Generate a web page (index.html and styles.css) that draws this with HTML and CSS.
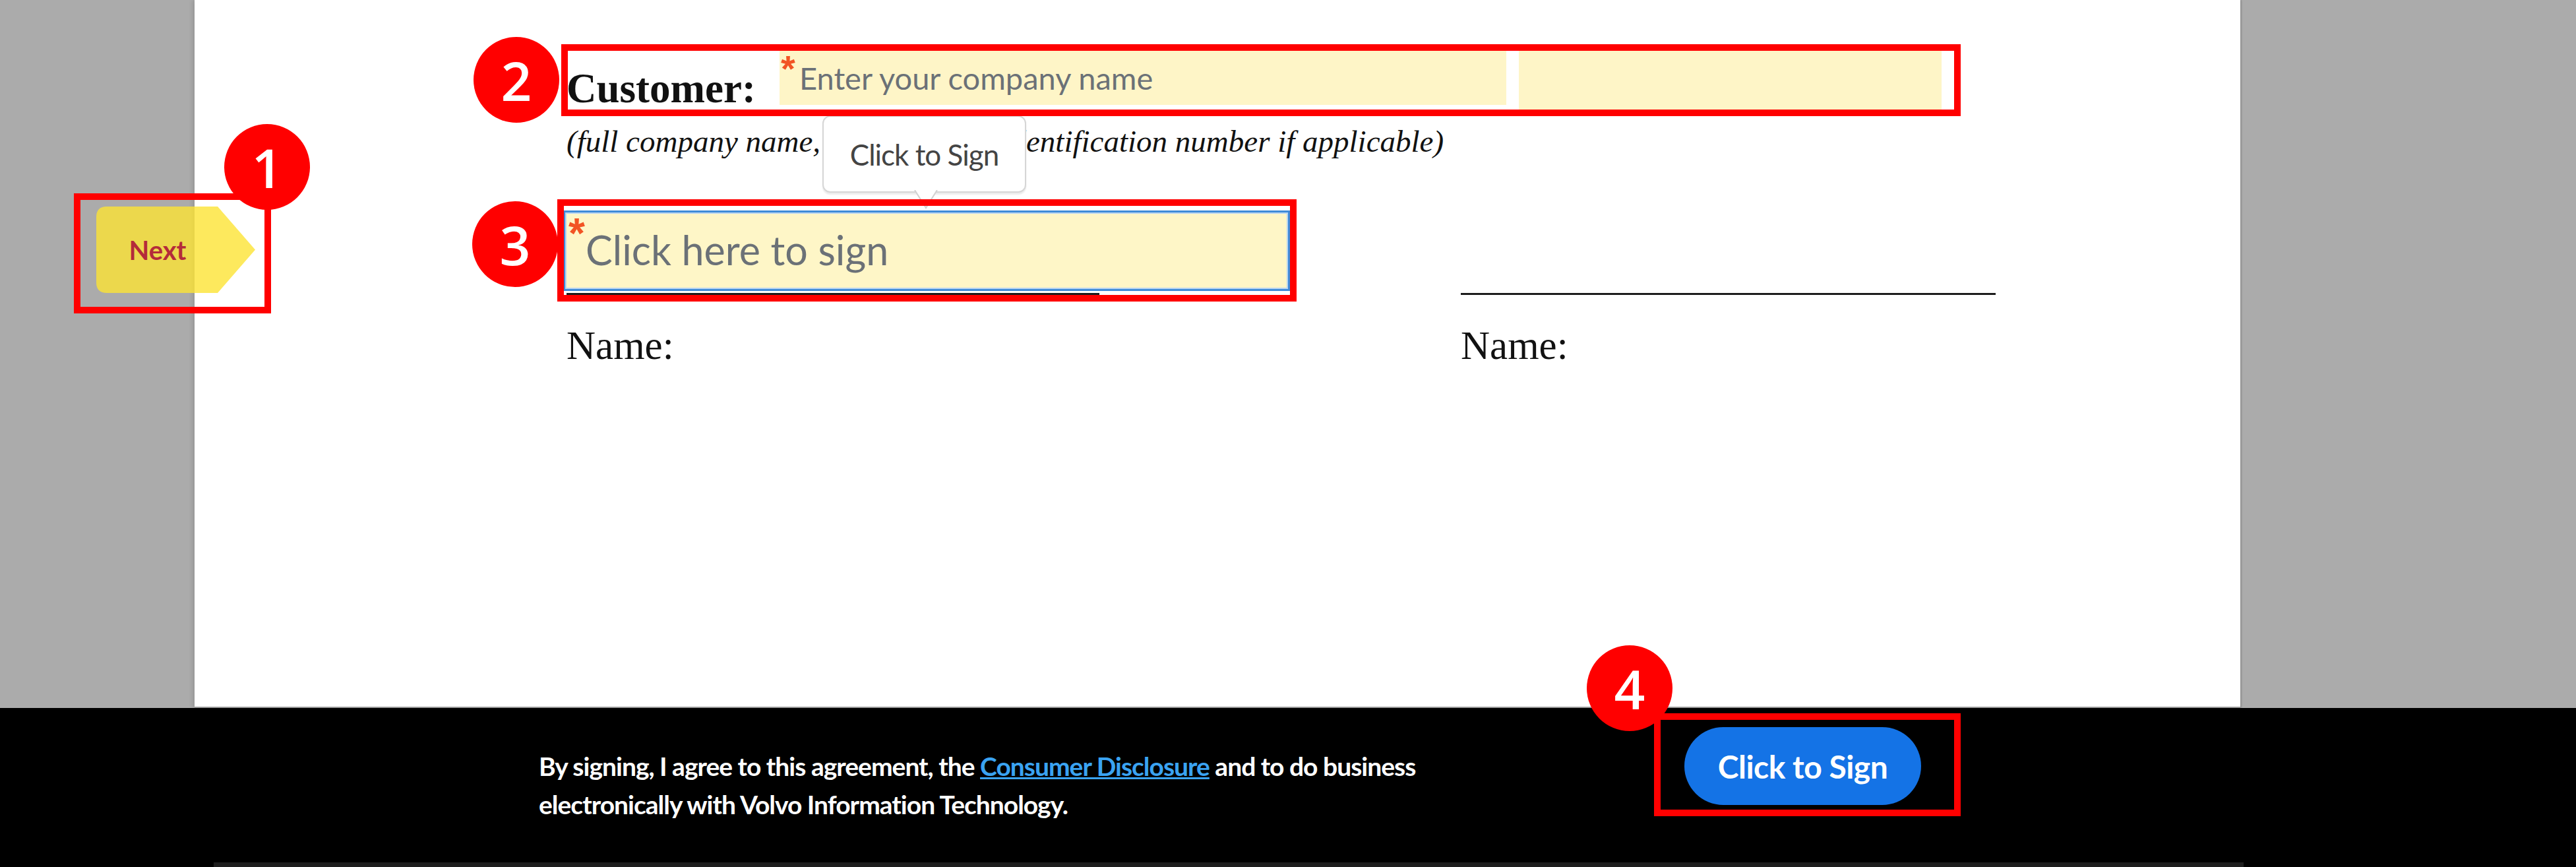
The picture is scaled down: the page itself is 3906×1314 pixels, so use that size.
FILE: index.html
```html
<!DOCTYPE html>
<html>
    <head>
        <meta charset="utf-8">
        <title>Sign agreement</title>
        <link rel="stylesheet" href="styles.css">
    </head>

    <body>
        <div id="viewer">
            <div id="page">
                <div class="customer_row">
                    <span class="customer_label">Customer:</span>
                    <div class="field field_company">
                        <span class="req">*</span>
                        <span class="placeholder">Enter your company name</span>
                    </div>
                    <div class="field field_extra"></div>
                </div>

                <p class="hint">(full company name, and company identification number if applicable)</p>

                <div class="sign_row">
                    <div class="sign_col sign_col_left">
                        <div class="sign_slot">
                            <div class="sign_field">
                                <span class="req req_big">*</span>
                                <span class="sign_text">Click here to sign</span>
                            </div>
                        </div>
                        <div class="sign_line sign_line_short"></div>
                        <div class="name_label">Name:</div>
                    </div>
                    <div class="sign_col">
                        <div class="sign_slot"></div>
                        <div class="sign_line"></div>
                        <div class="name_label">Name:</div>
                    </div>
                </div>
            </div>
        </div>

        <div id="footer">
            <div class="footer_main">
                <p class="consent">By signing, I agree to this agreement, the <a href="#">Consumer Disclosure</a> and to do business electronically with Volvo Information Technology.</p>
                <button class="sign_btn">Click to Sign</button>
            </div>
            <div class="footer_edge"></div>
        </div>

        <!-- floating bits: next tag, tooltip, and the numbered callouts -->
        <div id="overlay">
            <div class="next_tag">
                <svg width="241" height="131" viewBox="0 0 241 131">
                    <path d="M16 0 H184 L241 65.5 L184 131 H16 Q0 131 0 115 V16 Q0 0 16 0 Z" fill="rgba(252,228,52,0.8)"/>
                </svg>
                <span>Next</span>
            </div>

            <div class="tooltip">
                Click to Sign
                <svg class="tip_arrow" width="36" height="30" viewBox="0 0 36 30">
                    <path d="M1 0 L18 27 L35 0" fill="#fff" stroke="#d2d2d2" stroke-width="2"/>
                </svg>
            </div>

            <div class="mark mark_1"></div>
            <div class="mark mark_2"></div>
            <div class="mark mark_3"></div>
            <div class="mark mark_4"></div>

            <div class="badge badge_1">1</div>
            <div class="badge badge_2">2</div>
            <div class="badge badge_3">3</div>
            <div class="badge badge_4">4</div>
        </div>
    </body>
</html>
```

FILE: styles.css
```css
body {
    margin : 0;
    position : relative;
    background-color : #ababab;
    font-family : Lato, "Open Sans", sans-serif;
    overflow : hidden;
}

div#viewer {
    height : 1073px;
    display : flex;
}

div#page {
    margin-left : 295px;
    width : 3102px;
    box-sizing : border-box;
    background-color : white;
    border-bottom : 2px solid #9a9a9a;
    box-shadow : -3px 0 6px rgba(0,0,0,0.12), 2px 0 2px rgba(0,0,0,0.15);
    padding : 77px 0 0 564px;
}

/* customer line */

div.customer_row {
    display : flex;
    align-items : flex-start;
    height : 92px;
}

span.customer_label {
    width : 323px;
    padding-top : 26px;
    font : bold 63px/1 "Liberation Serif", serif;
    color : #111;
}

div.field {
    background-color : #fef5c7;
    position : relative;
}

div.field_company {
    width : 1102px;
    height : 82px;
    box-sizing : border-box;
    padding : 18px 0 0 30px;
}

div.field_extra {
    margin-left : 19px;
    width : 641px;
    height : 92px;
}

span.req {
    position : absolute;
    left : 2px;
    top : -1px;
    color : #f25424;
    font : bold 56px/1 "Liberation Sans", sans-serif;
}

span.req_big {
    left : 5px;
    top : 0;
    font-size : 64px;
}

span.placeholder {
    display : block;
    font-size : 47px;
    line-height : 1;
    color : #6b7177;
}

p.hint {
    margin : 18px 0 0;
    font : italic 47px/54px "Liberation Serif", serif;
    color : #111;
    white-space : nowrap;
}

/* signature blocks */

div.sign_row {
    display : flex;
    margin-top : 78px;
}

div.sign_col_left {
    width : 1356px;
}

div.sign_slot {
    height : 125px;
}

div.sign_field {
    position : relative;
    margin-left : -5px;
    width : 1102px;
    height : 122px;
    box-sizing : border-box;
    border : 3px solid #3f8bd8;
    box-shadow : inset 0 0 0 2px #b9d5f1;
    background-color : #fef6c7;
    padding : 26px 0 0 31px;
}

span.sign_text {
    display : block;
    font-size : 61px;
    line-height : 1;
    color : #6b7177;
}

div.sign_line {
    height : 3px;
    width : 811px;
    background-color : #1c1c1c;
}

div.sign_line_short {
    width : 808px;
}

div.name_label {
    margin-top : 42px;
    font : 61px/70px "Liberation Serif", serif;
    color : #111;
}

/* footer */

div#footer {
    height : 241px;
    background-color : black;
    display : flex;
    flex-direction : column;
}

div.footer_main {
    flex : 1;
    display : flex;
    align-items : flex-start;
    padding : 29px 0 0 817px;
}

p.consent {
    margin : 30px 0 0;
    width : 1400px;
    font-size : 39px;
    line-height : 58px;
    font-weight : bold;
    letter-spacing : -1px;
    color : white;
}

p.consent a {
    color : #3aa3f2;
}

button.sign_btn {
    margin-left : 337px;
    width : 359px;
    height : 118px;
    border : none;
    border-radius : 59px;
    background-color : #1473e6;
    color : white;
    font : bold 48px Lato, sans-serif;
    letter-spacing : -0.5px;
}

div.footer_edge {
    height : 7px;
    margin-left : 324px;
    width : 3078px;
    background-color : #1e1e1e;
}

/* overlay */

div#overlay {
    position : absolute;
    left : 0;
    top : 0;
    width : 100%;
    height : 100%;
    pointer-events : none;
}

div.next_tag {
    position : absolute;
    left : 146px;
    top : 313px;
    width : 241px;
    height : 131px;
}

div.next_tag svg {
    display : block;
}

div.next_tag span {
    position : absolute;
    left : 0;
    top : 0;
    width : 186px;
    height : 131px;
    display : flex;
    align-items : center;
    justify-content : center;
    font-size : 40px;
    font-weight : bold;
    color : #b42b3a;
}

div.tooltip {
    position : absolute;
    left : 1247px;
    top : 175px;
    width : 309px;
    height : 117px;
    box-sizing : border-box;
    border : 2px solid #d6d6d6;
    border-radius : 12px;
    background-color : white;
    box-shadow : 0 3px 2px rgba(0,0,0,0.08);
    display : flex;
    align-items : center;
    justify-content : center;
    font-size : 44px;
    letter-spacing : -1px;
    color : #444;
}

svg.tip_arrow {
    position : absolute;
    left : 137px;
    bottom : -28px;
}

div.mark {
    position : absolute;
    border : 10px solid #ff0000;
    box-sizing : border-box;
}

div.mark_1 { left : 112px;  top : 293px;  width : 299px;  height : 182px; }
div.mark_2 { left : 851px;  top : 67px;   width : 2122px; height : 109px; }
div.mark_3 { left : 845px;  top : 302px;  width : 1121px; height : 155px; }
div.mark_4 { left : 2508px; top : 1081px; width : 465px;  height : 156px; }

div.badge {
    position : absolute;
    width : 130px;
    height : 130px;
    border-radius : 50%;
    background-color : #ff0000;
    color : white;
    display : flex;
    align-items : center;
    justify-content : center;
    font : 600 82px/1 "Open Sans", sans-serif;
}

div.badge_1 { left : 340px;  top : 188px; }
div.badge_2 { left : 718px;  top : 56px; }
div.badge_3 { left : 716px;  top : 305px; }
div.badge_4 { left : 2406px; top : 978px; }
```
